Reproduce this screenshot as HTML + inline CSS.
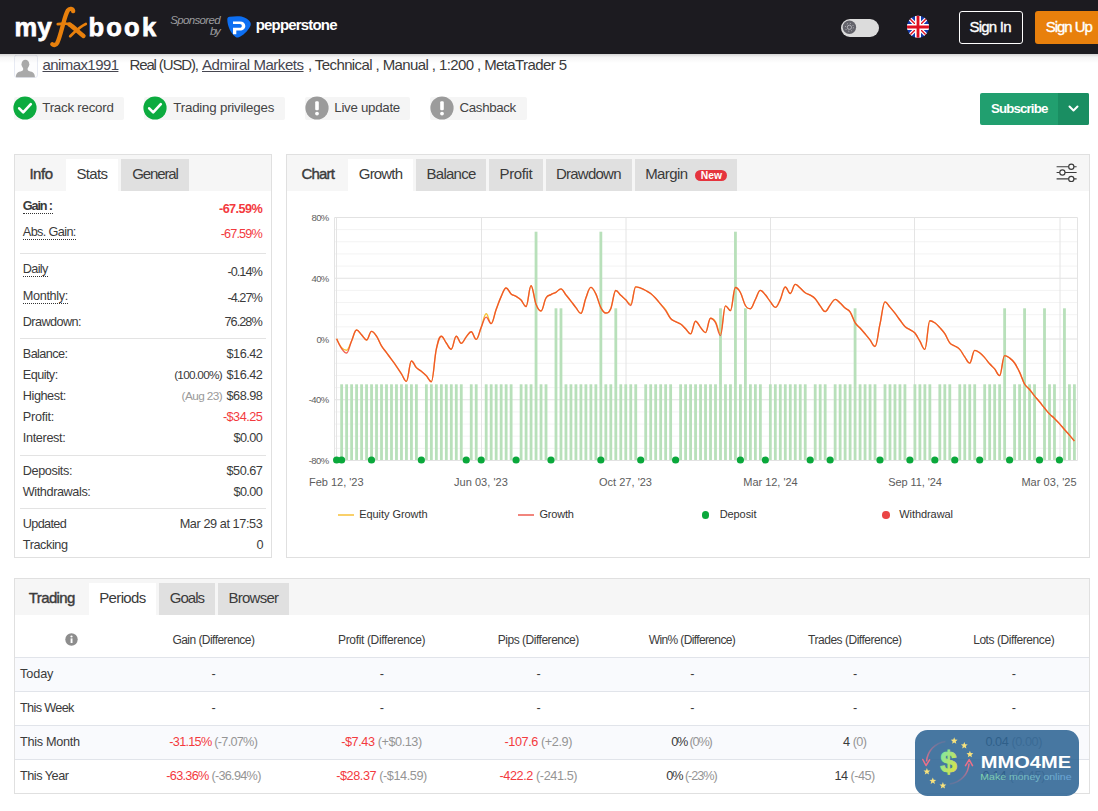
<!DOCTYPE html>
<html><head><meta charset="utf-8"><title>myfxbook</title>
<style>
*{box-sizing:border-box;margin:0;padding:0}
html,body{width:1098px;height:811px;overflow:hidden;background:#fff}
body{font-family:"Liberation Sans",sans-serif;color:#333;position:relative}
.abs{position:absolute;white-space:nowrap}
.hdr{left:0;top:0;width:1098px;height:53.6px;background:#1c1b20;z-index:5}
.hshadow{left:0;top:53.6px;width:1098px;height:9px;background:linear-gradient(rgba(0,0,0,0.17),rgba(0,0,0,0.045) 35%,rgba(0,0,0,0));z-index:5}
.t{position:absolute;white-space:nowrap;line-height:1}
.badge{position:absolute;top:97px;height:23px;background:#f5f5f5;border-radius:2px}
.panel{position:absolute;border:1px solid #e0e0e0;background:#fff}
.phead{position:absolute;left:0;top:0;right:0;background:#f6f6f6}
.tab{position:absolute;background:#e0e0e0}
.tabw{position:absolute;background:#fff}
.sep{position:absolute;height:1px;background:#e3e3e3}
.l{position:absolute;white-space:nowrap;line-height:1;font-size:12.3px;color:#333}
.r{position:absolute;white-space:nowrap;line-height:1;font-size:12.3px;color:#333;text-align:right}
.red{color:#f0323c}
.gr{color:#8e8e8e}
.dot{border-bottom:1px dotted #444;padding-bottom:1px}
.c{position:absolute;white-space:nowrap;line-height:1;font-size:12.3px;color:#333;text-align:center;transform:translateX(-50%)}
</style></head><body>
<!-- HEADER -->
<div class="abs hdr"></div>
<div class="abs hshadow"></div>
<div class="abs" style="left:0;top:0;width:1098px;height:54px;z-index:6">
<span class="t" style="left:14.40px;top:15.00px;font-size:25.50px;color:#fff;letter-spacing:0.545px;font-weight:bold;-webkit-text-stroke:0.75px #fff;">my</span>
<span class="t" style="left:88.50px;top:15.00px;font-size:25.50px;color:#fff;letter-spacing:2.230px;font-weight:bold;-webkit-text-stroke:0.75px #fff;">book</span>
<svg class="abs" style="left:48px;top:4px" width="44" height="46" viewBox="48 4 44 46"><g fill="none" stroke="#e8800c" stroke-linecap="round" stroke-linejoin="round"><path d="M73.2 11.200C72.800 8.600 69.600 7.800 67.800 10.500C66.200 13 64.800 18 63.300 23.500C61.500 30 59.500 38.500 57.200 43C56 45.200 53.800 45.600 52.300 44.200" stroke-width="4.300"/><path d="M57.8 24.200C62 23.500 66.500 23.600 70.400 24" stroke-width="2.700"/><path d="M69.5 24.500C73 26.500 79 32.500 83.500 36" stroke-width="4.400"/><path d="M85.8 24C81 26 75 31.500 70.200 36.200" stroke-width="2.700"/></g></svg>
<span class="t" style="left:170.20px;top:15.00px;font-size:11.50px;color:#9b9b9e;letter-spacing:-0.641px;font-style:italic;">Sponsored</span>
<span class="t" style="left:210.00px;top:26.00px;font-size:11.50px;color:#9b9b9e;letter-spacing:-1.446px;font-style:italic;">by</span>
<svg class="abs" style="left:225px;top:13px" width="28" height="27" viewBox="225 13 28 27"><path d="M227.300 19.200C227.300 17.700 228.200 17 229.600 16.800C233.500 16.100 238.500 15.900 241.500 16.500C245.500 17.300 249 19.800 250.300 22.200C251.100 23.800 250.800 25.200 250 26.800C247.500 31.500 243 35.500 238.800 37.300C237.600 37.800 236.600 37.700 235.600 36.900C231 33.300 227.300 26.500 227.300 19.200Z" fill="#0d6ff2"/><path d="M233 21.500h6.800c3.600 0 5.500 1.900 5.500 4.400c0 2.600-2 4.500-5.500 4.500h-3.500v3.800h-3.300v-6.500h6.700c1.400 0 2.100-.7 2.100-1.800c0-1.100-.7-1.800-2.100-1.800h-6.700z" fill="#fff"/></svg>
<span class="t" style="left:255.70px;top:17.00px;font-size:15.00px;color:#fff;letter-spacing:-0.822px;font-weight:bold;">pepperstone</span>
<div class="abs" style="left:841px;top:19px;width:38px;height:18px;border-radius:9px;background:#dcdcdc"></div>
<svg class="abs" style="left:841px;top:19px" width="18" height="18" viewBox="0 0 18 18"><circle cx="8.4" cy="8.3" r="6.7" fill="#62626a"/><circle cx="8.4" cy="8.3" r="2.1" fill="none" stroke="#b9b9be" stroke-width="0.9"/><g stroke="#b9b9be" stroke-width="1" stroke-dasharray="1.1 2.04"><circle cx="8.4" cy="8.3" r="4" fill="none"/></g></svg>
<svg class="abs" style="left:906px;top:15px" width="24" height="24" viewBox="0 0 24 24"><defs><clipPath id="fc"><circle cx="12" cy="11.8" r="11"/></clipPath></defs><g clip-path="url(#fc)"><rect width="24" height="24" fill="#1038ad"/><path d="M0 0L24 24M24 0L0 24" stroke="#fff" stroke-width="3.8"/><path d="M0 0L24 24M24 0L0 24" stroke="#e00f20" stroke-width="1.3"/><path d="M12 0V24M0 12H24" stroke="#fff" stroke-width="6"/><path d="M12 0V24M0 12H24" stroke="#e00f20" stroke-width="2.8"/></g></svg>
<div class="abs" style="left:959px;top:11px;width:64px;height:33px;border:1.3px solid #fff;border-radius:3px"></div>
<span class="t" style="left:969.50px;top:19.00px;font-size:15.00px;color:#fff;letter-spacing:-0.784px;-webkit-text-stroke:0.35px #fff;">Sign In</span>
<div class="abs" style="left:1035px;top:11px;width:70px;height:33px;background:#e8800c;border-radius:3px"></div>
<span class="t" style="left:1045.80px;top:19.00px;font-size:15.00px;color:#fff;letter-spacing:-1.061px;-webkit-text-stroke:0.35px #fff;">Sign Up</span>
</div>
<svg class="abs" style="left:14.400px;top:54.500px" width="24" height="23" viewBox="0 0 24 23"><rect x="0.500" y="0" width="23" height="22.500" rx="2.500" fill="#fdfdfe" stroke="#e7eaf3"/><ellipse cx="11.400" cy="9.300" rx="3.900" ry="4.500" fill="#a9a9a9"/><path d="M1.900 22.200C1.900 18.400 3.700 17.100 7.900 16.100C9.300 15.700 9.400 14 9 12.800L13.800 12.800C13.400 14 13.500 15.700 14.900 16.100C19.100 17.100 20.900 18.400 20.900 22.200Z" fill="#a9a9a9"/></svg>
<span class="t" style="left:42.50px;top:57.00px;font-size:15.00px;color:#464650;letter-spacing:-0.581px;text-decoration:underline;text-underline-offset:1px;text-decoration-thickness:1px;">animax1991</span>
<span class="t" style="left:129.50px;top:57.00px;font-size:15.00px;color:#3b3b3b;letter-spacing:-1.135px;">Real (USD),</span>
<span class="t" style="left:202.00px;top:57.00px;font-size:15.00px;color:#464650;letter-spacing:-0.454px;text-decoration:underline;text-underline-offset:1px;text-decoration-thickness:1px;">Admiral Markets</span>
<span class="t" style="left:308.00px;top:57.00px;font-size:15.00px;color:#3b3b3b;letter-spacing:-0.603px;">, Technical , Manual , 1:200 , MetaTrader 5</span>
<div class="badge" style="left:13.5px;width:110.5px"></div>
<svg class="abs" style="left:13.4px;top:96.4px" width="24" height="24" viewBox="0 0 24 24"><circle cx="12" cy="12" r="11.6" fill="#0cab3f"/><path d="M6.2 12.3l4 4.1l7.6-8.3" fill="none" stroke="#fff" stroke-width="2.6" stroke-linecap="round" stroke-linejoin="round"/></svg>
<span class="t" style="left:42.30px;top:101.00px;font-size:13.30px;color:#444;letter-spacing:-0.241px;">Track record</span>
<div class="badge" style="left:143.5px;width:141.0px"></div>
<svg class="abs" style="left:143.4px;top:96.4px" width="24" height="24" viewBox="0 0 24 24"><circle cx="12" cy="12" r="11.6" fill="#0cab3f"/><path d="M6.2 12.3l4 4.1l7.6-8.3" fill="none" stroke="#fff" stroke-width="2.6" stroke-linecap="round" stroke-linejoin="round"/></svg>
<span class="t" style="left:173.30px;top:101.00px;font-size:13.30px;color:#444;letter-spacing:-0.204px;">Trading privileges</span>
<div class="badge" style="left:304.7px;width:105.3px"></div>
<svg class="abs" style="left:304.6px;top:96.4px" width="24" height="24" viewBox="0 0 24 24"><circle cx="12" cy="12" r="11.6" fill="#9b9b9b"/><rect x="10.2" y="5.2" width="3.6" height="9" rx="1.2" fill="#fff"/><circle cx="12" cy="17.6" r="1.9" fill="#fff"/></svg>
<span class="t" style="left:334.30px;top:101.00px;font-size:13.30px;color:#444;letter-spacing:-0.287px;">Live update</span>
<div class="badge" style="left:429.7px;width:97.3px"></div>
<svg class="abs" style="left:429.6px;top:96.4px" width="24" height="24" viewBox="0 0 24 24"><circle cx="12" cy="12" r="11.6" fill="#9b9b9b"/><rect x="10.2" y="5.2" width="3.6" height="9" rx="1.2" fill="#fff"/><circle cx="12" cy="17.6" r="1.9" fill="#fff"/></svg>
<span class="t" style="left:459.60px;top:101.00px;font-size:13.30px;color:#444;letter-spacing:-0.363px;">Cashback</span>
<div class="abs" style="left:980px;top:93px;width:109px;height:31.7px;background:#219f6f;border-radius:2px"></div>
<div class="abs" style="left:1058px;top:93px;width:31px;height:31.7px;background:#1a8e62;border-radius:0 2px 2px 0"></div>
<span class="t" style="left:991.00px;top:102.00px;font-size:13.30px;color:#fff;letter-spacing:-0.875px;font-weight:bold;">Subscribe</span>
<svg class="abs" style="left:1066.5px;top:103.3px" width="13" height="11" viewBox="0 0 13 11"><path d="M2.5 3.5l4 4l4-4" fill="none" stroke="#fff" stroke-width="2" stroke-linecap="round" stroke-linejoin="round"/></svg>
<div class="panel" style="left:14px;top:154px;width:258px;height:404px"><div class="phead" style="height:36px"></div></div>
<div class="tabw" style="left:66px;top:159px;width:52px;height:32px"></div>
<div class="tab" style="left:121px;top:159px;width:68px;height:32px"></div>
<span class="t" style="left:29.40px;top:166.00px;font-size:15.00px;color:#3b3b3b;letter-spacing:-0.474px;-webkit-text-stroke:0.4px #3b3b3b;">Info</span>
<span class="t" style="left:76.40px;top:166.00px;font-size:15.00px;color:#3b3b3b;letter-spacing:-0.621px;">Stats</span>
<span class="t" style="left:132.20px;top:166.00px;font-size:15.00px;color:#3b3b3b;letter-spacing:-1.111px;">General</span>
<span class="t" style="left:22.80px;top:200.00px;font-size:12.70px;color:#3b3b3b;letter-spacing:-1.157px;font-weight:bold;">Gain :</span>
<div class="abs" style="left:22.8px;top:213.0px;width:30.2px;height:0;border-top:1px dotted #333"></div>
<span class="t" style="left:219.00px;top:203.00px;font-size:12.70px;color:#f33a3e;letter-spacing:-0.584px;font-weight:bold;">-67.59%</span>
<span class="t" style="left:22.80px;top:226.00px;font-size:12.70px;color:#3b3b3b;letter-spacing:-0.633px;">Abs. Gain:</span>
<div class="abs" style="left:22.8px;top:239.0px;width:53.6px;height:0;border-top:1px dotted #333"></div>
<span class="t" style="left:220.70px;top:228.00px;font-size:12.70px;color:#f33a3e;letter-spacing:-0.867px;">-67.59%</span>
<span class="t" style="left:22.80px;top:263.00px;font-size:12.70px;color:#3b3b3b;letter-spacing:-0.657px;">Daily</span>
<div class="abs" style="left:22.8px;top:276.0px;width:25.6px;height:0;border-top:1px dotted #333"></div>
<span class="t" style="left:227.40px;top:266.00px;font-size:12.70px;color:#3b3b3b;letter-spacing:-0.968px;">-0.14%</span>
<span class="t" style="left:22.80px;top:290.00px;font-size:12.70px;color:#3b3b3b;letter-spacing:-0.357px;">Monthly:</span>
<div class="abs" style="left:22.8px;top:303.4px;width:45.5px;height:0;border-top:1px dotted #333"></div>
<span class="t" style="left:227.40px;top:292.00px;font-size:12.70px;color:#3b3b3b;letter-spacing:-0.968px;">-4.27%</span>
<span class="t" style="left:22.80px;top:316.00px;font-size:12.70px;color:#3b3b3b;letter-spacing:-0.591px;">Drawdown:</span>
<span class="t" style="left:224.40px;top:316.00px;font-size:12.70px;color:#3b3b3b;letter-spacing:-0.935px;">76.28%</span>
<span class="t" style="left:22.80px;top:348.00px;font-size:12.70px;color:#3b3b3b;letter-spacing:-0.604px;">Balance:</span>
<span class="t" style="left:226.60px;top:348.00px;font-size:12.70px;color:#3b3b3b;letter-spacing:-0.529px;">$16.42</span>
<span class="t" style="left:22.80px;top:369.00px;font-size:12.70px;color:#3b3b3b;letter-spacing:-0.571px;">Equity:</span>
<span class="t" style="left:226.60px;top:369.00px;font-size:12.70px;color:#3b3b3b;letter-spacing:-0.529px;">$16.42</span>
<span class="t" style="left:174.20px;top:370.00px;font-size:11.80px;color:#3b3b3b;letter-spacing:-0.743px;">(100.00%)</span>
<span class="t" style="left:22.80px;top:390.00px;font-size:12.70px;color:#3b3b3b;letter-spacing:-0.442px;">Highest:</span>
<span class="t" style="left:226.60px;top:390.00px;font-size:12.70px;color:#3b3b3b;letter-spacing:-0.529px;">$68.98</span>
<span class="t" style="left:181.60px;top:391.00px;font-size:11.80px;color:#9a9a9a;letter-spacing:-0.594px;">(Aug 23)</span>
<span class="t" style="left:22.80px;top:411.00px;font-size:12.70px;color:#3b3b3b;letter-spacing:-0.279px;">Profit:</span>
<span class="t" style="left:222.90px;top:411.00px;font-size:12.70px;color:#f33a3e;letter-spacing:-0.529px;">-$34.25</span>
<span class="t" style="left:22.80px;top:432.00px;font-size:12.70px;color:#3b3b3b;letter-spacing:-0.361px;">Interest:</span>
<span class="t" style="left:233.50px;top:432.00px;font-size:12.70px;color:#3b3b3b;letter-spacing:-0.621px;">$0.00</span>
<span class="t" style="left:22.80px;top:465.00px;font-size:12.70px;color:#3b3b3b;letter-spacing:-0.405px;">Deposits:</span>
<span class="t" style="left:226.60px;top:465.00px;font-size:12.70px;color:#3b3b3b;letter-spacing:-0.529px;">$50.67</span>
<span class="t" style="left:22.80px;top:486.00px;font-size:12.70px;color:#3b3b3b;letter-spacing:-0.417px;">Withdrawals:</span>
<span class="t" style="left:233.50px;top:486.00px;font-size:12.70px;color:#3b3b3b;letter-spacing:-0.621px;">$0.00</span>
<span class="t" style="left:22.80px;top:518.00px;font-size:12.70px;color:#3b3b3b;letter-spacing:-0.670px;">Updated</span>
<span class="t" style="left:179.70px;top:518.00px;font-size:12.70px;color:#3b3b3b;letter-spacing:-0.419px;">Mar 29 at 17:53</span>
<span class="t" style="left:22.80px;top:539.00px;font-size:12.70px;color:#3b3b3b;letter-spacing:-0.432px;">Tracking</span>
<span class="t" style="left:256.60px;top:539.00px;font-size:12.70px;color:#3b3b3b;">0</span>
<div class="sep" style="left:20.3px;top:253px;width:245.4px"></div>
<div class="sep" style="left:20.3px;top:338px;width:245.4px"></div>
<div class="sep" style="left:20.3px;top:455px;width:245.4px"></div>
<div class="sep" style="left:20.3px;top:508px;width:245.4px"></div>
<div class="panel" style="left:286px;top:154px;width:804px;height:404px"><div class="phead" style="height:36px"></div></div>
<div class="tabw" style="left:348.3px;top:159px;width:64.7px;height:32px"></div>
<div class="tab" style="left:415.7px;top:159px;width:70.1px;height:32px"></div>
<div class="tab" style="left:489.0px;top:159px;width:54.2px;height:32px"></div>
<div class="tab" style="left:546.0px;top:159px;width:86.0px;height:32px"></div>
<div class="tab" style="left:634.7px;top:159px;width:102.0px;height:32px"></div>
<span class="t" style="left:301.60px;top:166.00px;font-size:15.00px;color:#3b3b3b;letter-spacing:-0.845px;-webkit-text-stroke:0.4px #3b3b3b;">Chart</span>
<span class="t" style="left:358.80px;top:166.00px;font-size:15.00px;color:#3b3b3b;letter-spacing:-0.830px;">Growth</span>
<span class="t" style="left:426.60px;top:166.00px;font-size:15.00px;color:#3b3b3b;letter-spacing:-0.751px;">Balance</span>
<span class="t" style="left:499.50px;top:166.00px;font-size:15.00px;color:#3b3b3b;letter-spacing:-0.362px;">Profit</span>
<span class="t" style="left:556.00px;top:166.00px;font-size:15.00px;color:#3b3b3b;letter-spacing:-0.766px;">Drawdown</span>
<span class="t" style="left:645.20px;top:166.00px;font-size:15.00px;color:#3b3b3b;letter-spacing:-0.610px;">Margin</span>
<div class="abs" style="left:695px;top:170px;width:32px;height:11.2px;border-radius:6px;background:#e5343e"></div>
<span class="t" style="left:700.80px;top:171.00px;font-size:10.30px;color:#fff;letter-spacing:0.011px;font-weight:bold;">New</span>
<svg class="abs" style="left:1054px;top:160px" width="26" height="26" viewBox="0 0 26 26"><g stroke="#3c3c3c" stroke-width="1.15" fill="#fbfbfb"><path d="M2.6 6.7H22.6M2.6 12.5H22.6M2.6 18.9H22.6"/><circle cx="17.3" cy="6.7" r="2.6"/><circle cx="8.4" cy="12.5" r="2.6"/><circle cx="17.3" cy="18.9" r="2.6"/></g></svg>
<svg class="abs" style="left:0;top:0" width="1098" height="811" viewBox="0 0 1098 811">
<line x1="334.5" x2="1077.5" y1="217.50" y2="217.50" stroke="#e2e2e2" stroke-width="1"/>
<line x1="334.5" x2="1077.5" y1="229.65" y2="229.65" stroke="#f3f3f3" stroke-width="1"/>
<line x1="334.5" x2="1077.5" y1="241.80" y2="241.80" stroke="#f3f3f3" stroke-width="1"/>
<line x1="334.5" x2="1077.5" y1="253.95" y2="253.95" stroke="#f3f3f3" stroke-width="1"/>
<line x1="334.5" x2="1077.5" y1="266.10" y2="266.10" stroke="#f3f3f3" stroke-width="1"/>
<line x1="334.5" x2="1077.5" y1="278.25" y2="278.25" stroke="#e2e2e2" stroke-width="1"/>
<line x1="334.5" x2="1077.5" y1="290.40" y2="290.40" stroke="#f3f3f3" stroke-width="1"/>
<line x1="334.5" x2="1077.5" y1="302.55" y2="302.55" stroke="#f3f3f3" stroke-width="1"/>
<line x1="334.5" x2="1077.5" y1="314.70" y2="314.70" stroke="#f3f3f3" stroke-width="1"/>
<line x1="334.5" x2="1077.5" y1="326.85" y2="326.85" stroke="#f3f3f3" stroke-width="1"/>
<line x1="334.5" x2="1077.5" y1="339.00" y2="339.00" stroke="#e2e2e2" stroke-width="1"/>
<line x1="334.5" x2="1077.5" y1="351.15" y2="351.15" stroke="#f3f3f3" stroke-width="1"/>
<line x1="334.5" x2="1077.5" y1="363.30" y2="363.30" stroke="#f3f3f3" stroke-width="1"/>
<line x1="334.5" x2="1077.5" y1="375.45" y2="375.45" stroke="#f3f3f3" stroke-width="1"/>
<line x1="334.5" x2="1077.5" y1="387.60" y2="387.60" stroke="#f3f3f3" stroke-width="1"/>
<line x1="334.5" x2="1077.5" y1="399.75" y2="399.75" stroke="#e2e2e2" stroke-width="1"/>
<line x1="334.5" x2="1077.5" y1="411.90" y2="411.90" stroke="#f3f3f3" stroke-width="1"/>
<line x1="334.5" x2="1077.5" y1="424.05" y2="424.05" stroke="#f3f3f3" stroke-width="1"/>
<line x1="334.5" x2="1077.5" y1="436.20" y2="436.20" stroke="#f3f3f3" stroke-width="1"/>
<line x1="334.5" x2="1077.5" y1="448.35" y2="448.35" stroke="#f3f3f3" stroke-width="1"/>
<line x1="334.5" x2="1077.5" y1="460.50" y2="460.50" stroke="#e2e2e2" stroke-width="1"/>
<line x1="334.5" x2="334.5" y1="217.5" y2="460.5" stroke="#e4e4e4" stroke-width="1"/>
<line x1="336.5" x2="336.5" y1="217.5" y2="460.5" stroke="#e4e4e4" stroke-width="1"/>
<line x1="481.5" x2="481.5" y1="217.5" y2="460.5" stroke="#e4e4e4" stroke-width="1"/>
<line x1="626.0" x2="626.0" y1="217.5" y2="460.5" stroke="#e4e4e4" stroke-width="1"/>
<line x1="770.5" x2="770.5" y1="217.5" y2="460.5" stroke="#e4e4e4" stroke-width="1"/>
<line x1="914.5" x2="914.5" y1="217.5" y2="460.5" stroke="#e4e4e4" stroke-width="1"/>
<line x1="1060.0" x2="1060.0" y1="217.5" y2="460.5" stroke="#e4e4e4" stroke-width="1"/>
<line x1="1077.5" x2="1077.5" y1="217.5" y2="460.5" stroke="#e4e4e4" stroke-width="1"/>
<rect x="340.23" y="384.3" width="2.8" height="75.7" fill="#b8e0ba"/>
<rect x="345.21" y="384.3" width="2.8" height="75.7" fill="#b8e0ba"/>
<rect x="350.20" y="384.3" width="2.8" height="75.7" fill="#b8e0ba"/>
<rect x="355.18" y="384.3" width="2.8" height="75.7" fill="#b8e0ba"/>
<rect x="360.17" y="384.3" width="2.8" height="75.7" fill="#b8e0ba"/>
<rect x="365.15" y="384.3" width="2.8" height="75.7" fill="#b8e0ba"/>
<rect x="370.14" y="384.3" width="2.8" height="75.7" fill="#b8e0ba"/>
<rect x="375.12" y="384.3" width="2.8" height="75.7" fill="#b8e0ba"/>
<rect x="380.11" y="384.3" width="2.8" height="75.7" fill="#b8e0ba"/>
<rect x="385.09" y="384.3" width="2.8" height="75.7" fill="#b8e0ba"/>
<rect x="390.08" y="384.3" width="2.8" height="75.7" fill="#b8e0ba"/>
<rect x="395.06" y="384.3" width="2.8" height="75.7" fill="#b8e0ba"/>
<rect x="400.05" y="384.3" width="2.8" height="75.7" fill="#b8e0ba"/>
<rect x="405.03" y="384.3" width="2.8" height="75.7" fill="#b8e0ba"/>
<rect x="410.02" y="384.3" width="2.8" height="75.7" fill="#b8e0ba"/>
<rect x="415.00" y="384.3" width="2.8" height="75.7" fill="#b8e0ba"/>
<rect x="424.97" y="384.3" width="2.8" height="75.7" fill="#b8e0ba"/>
<rect x="429.96" y="384.3" width="2.8" height="75.7" fill="#b8e0ba"/>
<rect x="434.94" y="384.3" width="2.8" height="75.7" fill="#b8e0ba"/>
<rect x="439.93" y="384.3" width="2.8" height="75.7" fill="#b8e0ba"/>
<rect x="444.91" y="384.3" width="2.8" height="75.7" fill="#b8e0ba"/>
<rect x="449.90" y="384.3" width="2.8" height="75.7" fill="#b8e0ba"/>
<rect x="454.88" y="384.3" width="2.8" height="75.7" fill="#b8e0ba"/>
<rect x="459.87" y="384.3" width="2.8" height="75.7" fill="#b8e0ba"/>
<rect x="469.84" y="384.3" width="2.8" height="75.7" fill="#b8e0ba"/>
<rect x="474.82" y="384.3" width="2.8" height="75.7" fill="#b8e0ba"/>
<rect x="484.79" y="384.3" width="2.8" height="75.7" fill="#b8e0ba"/>
<rect x="489.78" y="384.3" width="2.8" height="75.7" fill="#b8e0ba"/>
<rect x="494.76" y="384.3" width="2.8" height="75.7" fill="#b8e0ba"/>
<rect x="499.75" y="384.3" width="2.8" height="75.7" fill="#b8e0ba"/>
<rect x="504.73" y="384.3" width="2.8" height="75.7" fill="#b8e0ba"/>
<rect x="509.72" y="384.3" width="2.8" height="75.7" fill="#b8e0ba"/>
<rect x="519.69" y="384.3" width="2.8" height="75.7" fill="#b8e0ba"/>
<rect x="524.67" y="384.3" width="2.8" height="75.7" fill="#b8e0ba"/>
<rect x="529.65" y="384.3" width="2.8" height="75.7" fill="#b8e0ba"/>
<rect x="534.64" y="231.7" width="2.8" height="228.3" fill="#b8e0ba"/>
<rect x="539.62" y="384.3" width="2.8" height="75.7" fill="#b8e0ba"/>
<rect x="544.61" y="384.3" width="2.8" height="75.7" fill="#b8e0ba"/>
<rect x="554.58" y="308.3" width="2.8" height="151.7" fill="#b8e0ba"/>
<rect x="559.57" y="308.3" width="2.8" height="151.7" fill="#b8e0ba"/>
<rect x="564.55" y="384.3" width="2.8" height="75.7" fill="#b8e0ba"/>
<rect x="569.54" y="384.3" width="2.8" height="75.7" fill="#b8e0ba"/>
<rect x="574.52" y="384.3" width="2.8" height="75.7" fill="#b8e0ba"/>
<rect x="579.51" y="384.3" width="2.8" height="75.7" fill="#b8e0ba"/>
<rect x="584.49" y="384.3" width="2.8" height="75.7" fill="#b8e0ba"/>
<rect x="589.48" y="384.3" width="2.8" height="75.7" fill="#b8e0ba"/>
<rect x="594.46" y="384.3" width="2.8" height="75.7" fill="#b8e0ba"/>
<rect x="599.45" y="231.7" width="2.8" height="228.3" fill="#b8e0ba"/>
<rect x="604.43" y="384.3" width="2.8" height="75.7" fill="#b8e0ba"/>
<rect x="609.41" y="384.3" width="2.8" height="75.7" fill="#b8e0ba"/>
<rect x="614.40" y="308.3" width="2.8" height="151.7" fill="#b8e0ba"/>
<rect x="619.38" y="384.3" width="2.8" height="75.7" fill="#b8e0ba"/>
<rect x="624.37" y="384.3" width="2.8" height="75.7" fill="#b8e0ba"/>
<rect x="629.36" y="384.3" width="2.8" height="75.7" fill="#b8e0ba"/>
<rect x="634.34" y="384.3" width="2.8" height="75.7" fill="#b8e0ba"/>
<rect x="644.31" y="384.3" width="2.8" height="75.7" fill="#b8e0ba"/>
<rect x="649.30" y="384.3" width="2.8" height="75.7" fill="#b8e0ba"/>
<rect x="654.28" y="384.3" width="2.8" height="75.7" fill="#b8e0ba"/>
<rect x="659.27" y="384.3" width="2.8" height="75.7" fill="#b8e0ba"/>
<rect x="664.25" y="384.3" width="2.8" height="75.7" fill="#b8e0ba"/>
<rect x="669.24" y="384.3" width="2.8" height="75.7" fill="#b8e0ba"/>
<rect x="679.21" y="384.3" width="2.8" height="75.7" fill="#b8e0ba"/>
<rect x="684.19" y="384.3" width="2.8" height="75.7" fill="#b8e0ba"/>
<rect x="689.18" y="384.3" width="2.8" height="75.7" fill="#b8e0ba"/>
<rect x="694.16" y="384.3" width="2.8" height="75.7" fill="#b8e0ba"/>
<rect x="699.14" y="384.3" width="2.8" height="75.7" fill="#b8e0ba"/>
<rect x="704.13" y="384.3" width="2.8" height="75.7" fill="#b8e0ba"/>
<rect x="709.12" y="384.3" width="2.8" height="75.7" fill="#b8e0ba"/>
<rect x="714.10" y="384.3" width="2.8" height="75.7" fill="#b8e0ba"/>
<rect x="719.09" y="308.3" width="2.8" height="151.7" fill="#b8e0ba"/>
<rect x="724.07" y="384.3" width="2.8" height="75.7" fill="#b8e0ba"/>
<rect x="729.06" y="384.3" width="2.8" height="75.7" fill="#b8e0ba"/>
<rect x="734.04" y="231.7" width="2.8" height="228.3" fill="#b8e0ba"/>
<rect x="739.03" y="384.3" width="2.8" height="75.7" fill="#b8e0ba"/>
<rect x="744.01" y="308.3" width="2.8" height="151.7" fill="#b8e0ba"/>
<rect x="749.00" y="384.3" width="2.8" height="75.7" fill="#b8e0ba"/>
<rect x="753.98" y="384.3" width="2.8" height="75.7" fill="#b8e0ba"/>
<rect x="758.97" y="384.3" width="2.8" height="75.7" fill="#b8e0ba"/>
<rect x="768.94" y="384.3" width="2.8" height="75.7" fill="#b8e0ba"/>
<rect x="773.92" y="384.3" width="2.8" height="75.7" fill="#b8e0ba"/>
<rect x="778.90" y="384.3" width="2.8" height="75.7" fill="#b8e0ba"/>
<rect x="783.89" y="384.3" width="2.8" height="75.7" fill="#b8e0ba"/>
<rect x="788.88" y="384.3" width="2.8" height="75.7" fill="#b8e0ba"/>
<rect x="793.86" y="384.3" width="2.8" height="75.7" fill="#b8e0ba"/>
<rect x="798.85" y="384.3" width="2.8" height="75.7" fill="#b8e0ba"/>
<rect x="803.83" y="384.3" width="2.8" height="75.7" fill="#b8e0ba"/>
<rect x="813.80" y="384.3" width="2.8" height="75.7" fill="#b8e0ba"/>
<rect x="818.79" y="384.3" width="2.8" height="75.7" fill="#b8e0ba"/>
<rect x="823.77" y="384.3" width="2.8" height="75.7" fill="#b8e0ba"/>
<rect x="833.74" y="384.3" width="2.8" height="75.7" fill="#b8e0ba"/>
<rect x="838.73" y="384.3" width="2.8" height="75.7" fill="#b8e0ba"/>
<rect x="843.71" y="384.3" width="2.8" height="75.7" fill="#b8e0ba"/>
<rect x="848.70" y="384.3" width="2.8" height="75.7" fill="#b8e0ba"/>
<rect x="853.68" y="308.3" width="2.8" height="151.7" fill="#b8e0ba"/>
<rect x="858.67" y="384.3" width="2.8" height="75.7" fill="#b8e0ba"/>
<rect x="863.65" y="384.3" width="2.8" height="75.7" fill="#b8e0ba"/>
<rect x="868.64" y="384.3" width="2.8" height="75.7" fill="#b8e0ba"/>
<rect x="873.62" y="384.3" width="2.8" height="75.7" fill="#b8e0ba"/>
<rect x="883.59" y="384.3" width="2.8" height="75.7" fill="#b8e0ba"/>
<rect x="888.58" y="384.3" width="2.8" height="75.7" fill="#b8e0ba"/>
<rect x="893.56" y="384.3" width="2.8" height="75.7" fill="#b8e0ba"/>
<rect x="898.55" y="384.3" width="2.8" height="75.7" fill="#b8e0ba"/>
<rect x="903.53" y="384.3" width="2.8" height="75.7" fill="#b8e0ba"/>
<rect x="913.50" y="384.3" width="2.8" height="75.7" fill="#b8e0ba"/>
<rect x="918.49" y="384.3" width="2.8" height="75.7" fill="#b8e0ba"/>
<rect x="923.47" y="384.3" width="2.8" height="75.7" fill="#b8e0ba"/>
<rect x="928.46" y="384.3" width="2.8" height="75.7" fill="#b8e0ba"/>
<rect x="938.43" y="384.3" width="2.8" height="75.7" fill="#b8e0ba"/>
<rect x="943.41" y="384.3" width="2.8" height="75.7" fill="#b8e0ba"/>
<rect x="948.40" y="384.3" width="2.8" height="75.7" fill="#b8e0ba"/>
<rect x="958.37" y="384.3" width="2.8" height="75.7" fill="#b8e0ba"/>
<rect x="963.35" y="384.3" width="2.8" height="75.7" fill="#b8e0ba"/>
<rect x="968.34" y="384.3" width="2.8" height="75.7" fill="#b8e0ba"/>
<rect x="973.32" y="384.3" width="2.8" height="75.7" fill="#b8e0ba"/>
<rect x="983.29" y="384.3" width="2.8" height="75.7" fill="#b8e0ba"/>
<rect x="988.28" y="384.3" width="2.8" height="75.7" fill="#b8e0ba"/>
<rect x="993.26" y="384.3" width="2.8" height="75.7" fill="#b8e0ba"/>
<rect x="998.25" y="384.3" width="2.8" height="75.7" fill="#b8e0ba"/>
<rect x="1003.23" y="308.3" width="2.8" height="151.7" fill="#b8e0ba"/>
<rect x="1013.20" y="384.3" width="2.8" height="75.7" fill="#b8e0ba"/>
<rect x="1018.19" y="384.3" width="2.8" height="75.7" fill="#b8e0ba"/>
<rect x="1023.17" y="308.3" width="2.8" height="151.7" fill="#b8e0ba"/>
<rect x="1028.16" y="384.3" width="2.8" height="75.7" fill="#b8e0ba"/>
<rect x="1033.14" y="384.3" width="2.8" height="75.7" fill="#b8e0ba"/>
<rect x="1043.11" y="308.3" width="2.8" height="151.7" fill="#b8e0ba"/>
<rect x="1048.10" y="384.3" width="2.8" height="75.7" fill="#b8e0ba"/>
<rect x="1053.08" y="384.3" width="2.8" height="75.7" fill="#b8e0ba"/>
<rect x="1063.05" y="308.3" width="2.8" height="151.7" fill="#b8e0ba"/>
<rect x="1068.04" y="384.3" width="2.8" height="75.7" fill="#b8e0ba"/>
<rect x="1073.02" y="384.3" width="2.8" height="75.7" fill="#b8e0ba"/>
<path d="M336.62 338.70C336.62 338.70 339.61 345.30 341.60 347.60C343.59 349.90 344.59 350.20 346.59 350.20C348.58 350.20 349.58 345.04 351.57 341.00C353.56 336.96 354.56 330.00 356.56 330.00C358.55 330.00 359.55 332.80 361.54 334.80C363.53 336.80 364.53 340.00 366.53 340.00C368.52 340.00 369.52 331.40 371.51 331.40C373.50 331.40 374.50 333.32 376.50 336.20C378.49 339.08 379.49 342.52 381.48 345.80C383.47 349.08 384.47 349.88 386.47 352.60C388.46 355.32 389.46 356.66 391.45 359.40C393.44 362.14 394.44 363.42 396.44 366.30C398.43 369.18 399.43 370.80 401.42 373.80C403.41 376.80 404.41 381.30 406.41 381.30C408.40 381.30 409.40 361.00 411.39 361.00C413.38 361.00 414.38 365.54 416.38 367.60C418.37 369.66 419.37 369.66 421.36 371.30C423.35 372.94 424.35 373.72 426.35 375.80C428.34 377.88 429.34 381.70 431.33 381.70C433.32 381.70 434.32 358.30 436.32 349.20C438.31 340.10 439.31 336.20 441.30 336.20C443.29 336.20 444.29 340.40 446.29 343.00C448.28 345.60 449.28 349.20 451.27 349.20C453.26 349.20 454.26 336.20 456.25 336.20C458.25 336.20 459.25 343.30 461.24 343.30C463.23 343.30 464.23 339.22 466.23 336.90C468.22 334.58 469.22 331.70 471.21 331.70C473.20 331.70 474.20 339.40 476.20 339.40C478.19 339.40 479.19 332.54 481.18 327.40C483.17 322.26 484.17 313.70 486.17 313.70C488.16 313.70 489.16 323.60 491.15 323.60C493.14 323.60 494.14 315.00 496.13 309.60C498.13 304.20 499.13 300.92 501.12 296.60C503.11 292.28 504.11 288.00 506.11 288.00C508.10 288.00 509.10 292.22 511.09 293.90C513.08 295.58 514.08 295.18 516.08 296.40C518.07 297.62 519.07 297.98 521.06 300.00C523.05 302.02 524.05 306.50 526.05 306.50C528.04 306.50 529.04 285.70 531.03 285.70C533.02 285.70 534.02 299.14 536.02 304.20C538.01 309.26 539.01 311.00 541.00 311.00C542.99 311.00 543.99 301.28 545.99 298.00C547.98 294.72 548.98 295.74 550.97 294.60C552.96 293.46 553.96 293.44 555.96 292.30C557.95 291.16 558.95 288.90 560.94 288.90C562.93 288.90 563.93 292.46 565.93 294.90C567.92 297.34 568.92 298.56 570.91 301.10C572.90 303.64 573.90 305.14 575.89 307.60C577.89 310.06 578.89 313.40 580.88 313.40C582.87 313.40 583.87 303.22 585.87 298.00C587.86 292.78 588.86 287.30 590.85 287.30C592.84 287.30 593.84 289.84 595.84 293.90C597.83 297.96 598.83 303.78 600.82 307.60C602.81 311.42 603.81 313.00 605.81 313.00C607.80 313.00 608.80 313.00 610.79 308.60C612.78 304.20 613.78 290.50 615.78 290.50C617.77 290.50 618.77 293.44 620.76 295.30C622.75 297.16 623.75 298.00 625.75 299.80C627.74 301.60 628.74 304.30 630.73 304.30C632.72 304.30 633.72 286.80 635.72 286.80C637.71 286.80 638.71 287.46 640.70 288.20C642.69 288.94 643.69 289.44 645.69 290.50C647.68 291.56 648.68 291.94 650.67 293.50C652.66 295.06 653.66 296.16 655.65 298.30C657.65 300.44 658.65 301.94 660.64 304.20C662.63 306.46 663.63 306.74 665.62 309.60C667.62 312.46 668.62 316.10 670.61 318.50C672.60 320.90 673.60 320.50 675.60 321.60C677.59 322.70 678.59 322.58 680.58 324.00C682.57 325.42 683.57 326.72 685.57 328.70C687.56 330.68 688.56 333.90 690.55 333.90C692.54 333.90 693.54 321.20 695.54 321.20C697.53 321.20 698.53 325.12 700.52 327.40C702.51 329.68 703.51 332.60 705.51 332.60C707.50 332.60 708.50 318.20 710.49 318.20C712.48 318.20 713.48 318.52 715.48 321.60C717.47 324.68 718.47 333.60 720.46 333.60C722.45 333.60 723.45 305.80 725.45 305.80C727.44 305.80 728.44 310.60 730.43 310.60C732.42 310.60 733.42 287.50 735.41 287.50C737.41 287.50 738.41 288.90 740.40 292.50C742.39 296.10 743.39 302.30 745.38 305.50C747.38 308.70 748.38 308.70 750.37 308.70C752.36 308.70 753.36 303.18 755.36 299.50C757.35 295.82 758.35 290.30 760.34 290.30C762.33 290.30 763.33 292.52 765.33 294.80C767.32 297.08 768.32 299.18 770.31 301.70C772.30 304.22 773.30 307.40 775.30 307.40C777.29 307.40 778.29 303.68 780.28 299.60C782.27 295.52 783.27 287.00 785.27 287.00C787.26 287.00 788.26 293.50 790.25 293.50C792.24 293.50 793.24 284.30 795.24 284.30C797.23 284.30 798.23 286.30 800.22 288.00C802.21 289.70 803.21 291.36 805.21 292.80C807.20 294.24 808.20 294.02 810.19 295.20C812.18 296.38 813.18 296.58 815.18 298.70C817.17 300.82 818.17 303.22 820.16 305.80C822.15 308.38 823.15 311.60 825.14 311.60C827.14 311.60 828.14 307.56 830.13 305.10C832.12 302.64 833.12 299.30 835.12 299.30C837.11 299.30 838.11 301.24 840.10 303.00C842.09 304.76 843.09 306.32 845.09 308.10C847.08 309.88 848.08 309.00 850.07 311.90C852.06 314.80 853.06 319.38 855.06 322.60C857.05 325.82 858.05 325.76 860.04 328.00C862.03 330.24 863.03 331.42 865.03 333.80C867.02 336.18 868.02 337.36 870.01 339.90C872.00 342.44 873.00 346.50 875.00 346.50C876.99 346.50 877.99 333.12 879.98 324.20C881.97 315.28 882.97 301.90 884.97 301.90C886.96 301.90 887.96 304.84 889.95 307.10C891.94 309.36 892.94 310.62 894.94 313.20C896.93 315.78 897.93 317.32 899.92 320.00C901.91 322.68 902.91 324.68 904.91 326.60C906.90 328.52 907.90 328.32 909.89 329.60C911.88 330.88 912.88 330.68 914.88 333.00C916.87 335.32 917.87 337.92 919.86 341.20C921.85 344.48 922.85 349.40 924.85 349.40C926.84 349.40 927.84 320.70 929.83 320.70C931.82 320.70 932.82 321.42 934.82 322.80C936.81 324.18 937.81 325.42 939.80 327.60C941.79 329.78 942.79 330.64 944.79 333.70C946.78 336.76 947.78 340.44 949.77 342.90C951.76 345.36 952.76 344.70 954.76 346.00C956.75 347.30 957.75 347.22 959.74 349.40C961.73 351.58 962.73 354.16 964.73 356.90C966.72 359.64 967.72 363.10 969.71 363.10C971.70 363.10 972.70 350.40 974.70 350.40C976.69 350.40 977.69 351.36 979.68 352.80C981.67 354.24 982.67 355.40 984.67 357.60C986.66 359.80 987.66 361.54 989.65 363.80C991.64 366.06 992.64 366.54 994.64 368.90C996.63 371.26 997.63 375.60 999.62 375.60C1001.61 375.60 1002.61 355.60 1004.61 355.60C1006.60 355.60 1007.60 356.52 1009.59 358.00C1011.58 359.48 1012.58 360.18 1014.58 363.00C1016.57 365.82 1017.57 367.90 1019.56 372.10C1021.55 376.30 1022.55 380.52 1024.55 384.00C1026.54 387.48 1027.54 387.12 1029.53 389.50C1031.52 391.88 1032.52 393.44 1034.52 395.90C1036.51 398.36 1037.51 399.38 1039.50 401.80C1041.49 404.22 1042.49 405.58 1044.49 408.00C1046.48 410.42 1047.48 411.82 1049.47 413.90C1051.46 415.98 1052.46 416.46 1054.45 418.40C1056.45 420.34 1057.45 421.38 1059.44 423.60C1061.43 425.82 1062.43 427.20 1064.43 429.50C1066.42 431.80 1067.42 432.80 1069.41 435.10C1071.40 437.40 1074.39 441.00 1074.39 441.00" fill="none" stroke="#f7c331" stroke-width="1.35" stroke-linejoin="round"/>
<path d="M336.62 338.70C336.62 338.70 339.61 345.64 341.60 348.50C343.59 351.36 344.59 353.00 346.59 353.00C348.58 353.00 349.58 345.60 351.57 341.00C353.56 336.40 354.56 330.00 356.56 330.00C358.55 330.00 359.55 332.80 361.54 334.80C363.53 336.80 364.53 340.00 366.53 340.00C368.52 340.00 369.52 331.40 371.51 331.40C373.50 331.40 374.50 333.32 376.50 336.20C378.49 339.08 379.49 342.52 381.48 345.80C383.47 349.08 384.47 349.88 386.47 352.60C388.46 355.32 389.46 356.66 391.45 359.40C393.44 362.14 394.44 363.42 396.44 366.30C398.43 369.18 399.43 370.80 401.42 373.80C403.41 376.80 404.41 381.30 406.41 381.30C408.40 381.30 409.40 361.00 411.39 361.00C413.38 361.00 414.38 365.54 416.38 367.60C418.37 369.66 419.37 369.66 421.36 371.30C423.35 372.94 424.35 373.72 426.35 375.80C428.34 377.88 429.34 381.70 431.33 381.70C433.32 381.70 434.32 358.30 436.32 349.20C438.31 340.10 439.31 336.20 441.30 336.20C443.29 336.20 444.29 340.40 446.29 343.00C448.28 345.60 449.28 349.20 451.27 349.20C453.26 349.20 454.26 336.20 456.25 336.20C458.25 336.20 459.25 343.30 461.24 343.30C463.23 343.30 464.23 339.22 466.23 336.90C468.22 334.58 469.22 331.70 471.21 331.70C473.20 331.70 474.20 339.40 476.20 339.40C478.19 339.40 479.19 331.86 481.18 327.40C483.17 322.94 484.17 317.10 486.17 317.10C488.16 317.10 489.16 323.60 491.15 323.60C493.14 323.60 494.14 315.00 496.13 309.60C498.13 304.20 499.13 300.92 501.12 296.60C503.11 292.28 504.11 288.00 506.11 288.00C508.10 288.00 509.10 292.22 511.09 293.90C513.08 295.58 514.08 295.18 516.08 296.40C518.07 297.62 519.07 297.98 521.06 300.00C523.05 302.02 524.05 306.50 526.05 306.50C528.04 306.50 529.04 285.70 531.03 285.70C533.02 285.70 534.02 299.14 536.02 304.20C538.01 309.26 539.01 311.00 541.00 311.00C542.99 311.00 543.99 301.28 545.99 298.00C547.98 294.72 548.98 295.74 550.97 294.60C552.96 293.46 553.96 293.44 555.96 292.30C557.95 291.16 558.95 288.90 560.94 288.90C562.93 288.90 563.93 292.46 565.93 294.90C567.92 297.34 568.92 298.56 570.91 301.10C572.90 303.64 573.90 305.14 575.89 307.60C577.89 310.06 578.89 313.40 580.88 313.40C582.87 313.40 583.87 303.22 585.87 298.00C587.86 292.78 588.86 287.30 590.85 287.30C592.84 287.30 593.84 289.84 595.84 293.90C597.83 297.96 598.83 303.78 600.82 307.60C602.81 311.42 603.81 313.00 605.81 313.00C607.80 313.00 608.80 313.00 610.79 308.60C612.78 304.20 613.78 290.50 615.78 290.50C617.77 290.50 618.77 293.44 620.76 295.30C622.75 297.16 623.75 297.76 625.75 299.80C627.74 301.84 628.74 305.50 630.73 305.50C632.72 305.50 633.72 286.80 635.72 286.80C637.71 286.80 638.71 287.46 640.70 288.20C642.69 288.94 643.69 289.44 645.69 290.50C647.68 291.56 648.68 291.94 650.67 293.50C652.66 295.06 653.66 296.16 655.65 298.30C657.65 300.44 658.65 301.72 660.64 304.20C662.63 306.68 663.63 307.84 665.62 310.70C667.62 313.56 668.62 316.32 670.61 318.50C672.60 320.68 673.60 320.50 675.60 321.60C677.59 322.70 678.59 322.58 680.58 324.00C682.57 325.42 683.57 326.72 685.57 328.70C687.56 330.68 688.56 333.90 690.55 333.90C692.54 333.90 693.54 321.20 695.54 321.20C697.53 321.20 698.53 325.12 700.52 327.40C702.51 329.68 703.51 332.60 705.51 332.60C707.50 332.60 708.50 318.20 710.49 318.20C712.48 318.20 713.48 319.12 715.48 322.60C717.47 326.08 718.47 335.60 720.46 335.60C722.45 335.60 723.45 305.80 725.45 305.80C727.44 305.80 728.44 310.60 730.43 310.60C732.42 310.60 733.42 287.50 735.41 287.50C737.41 287.50 738.41 288.90 740.40 292.50C742.39 296.10 743.39 302.30 745.38 305.50C747.38 308.70 748.38 308.70 750.37 308.70C752.36 308.70 753.36 303.18 755.36 299.50C757.35 295.82 758.35 290.30 760.34 290.30C762.33 290.30 763.33 292.52 765.33 294.80C767.32 297.08 768.32 299.18 770.31 301.70C772.30 304.22 773.30 307.40 775.30 307.40C777.29 307.40 778.29 303.68 780.28 299.60C782.27 295.52 783.27 287.00 785.27 287.00C787.26 287.00 788.26 293.50 790.25 293.50C792.24 293.50 793.24 284.30 795.24 284.30C797.23 284.30 798.23 286.30 800.22 288.00C802.21 289.70 803.21 291.36 805.21 292.80C807.20 294.24 808.20 294.02 810.19 295.20C812.18 296.38 813.18 296.58 815.18 298.70C817.17 300.82 818.17 303.22 820.16 305.80C822.15 308.38 823.15 311.60 825.14 311.60C827.14 311.60 828.14 307.56 830.13 305.10C832.12 302.64 833.12 299.30 835.12 299.30C837.11 299.30 838.11 301.24 840.10 303.00C842.09 304.76 843.09 306.32 845.09 308.10C847.08 309.88 848.08 309.00 850.07 311.90C852.06 314.80 853.06 319.38 855.06 322.60C857.05 325.82 858.05 325.76 860.04 328.00C862.03 330.24 863.03 331.42 865.03 333.80C867.02 336.18 868.02 337.36 870.01 339.90C872.00 342.44 873.00 346.50 875.00 346.50C876.99 346.50 877.99 333.12 879.98 324.20C881.97 315.28 882.97 301.90 884.97 301.90C886.96 301.90 887.96 304.84 889.95 307.10C891.94 309.36 892.94 310.62 894.94 313.20C896.93 315.78 897.93 317.32 899.92 320.00C901.91 322.68 902.91 324.68 904.91 326.60C906.90 328.52 907.90 328.32 909.89 329.60C911.88 330.88 912.88 330.68 914.88 333.00C916.87 335.32 917.87 337.92 919.86 341.20C921.85 344.48 922.85 349.40 924.85 349.40C926.84 349.40 927.84 320.70 929.83 320.70C931.82 320.70 932.82 321.42 934.82 322.80C936.81 324.18 937.81 325.42 939.80 327.60C941.79 329.78 942.79 330.64 944.79 333.70C946.78 336.76 947.78 340.44 949.77 342.90C951.76 345.36 952.76 344.70 954.76 346.00C956.75 347.30 957.75 347.22 959.74 349.40C961.73 351.58 962.73 354.16 964.73 356.90C966.72 359.64 967.72 363.10 969.71 363.10C971.70 363.10 972.70 350.40 974.70 350.40C976.69 350.40 977.69 351.36 979.68 352.80C981.67 354.24 982.67 355.40 984.67 357.60C986.66 359.80 987.66 361.54 989.65 363.80C991.64 366.06 992.64 366.54 994.64 368.90C996.63 371.26 997.63 375.60 999.62 375.60C1001.61 375.60 1002.61 355.60 1004.61 355.60C1006.60 355.60 1007.60 356.52 1009.59 358.00C1011.58 359.48 1012.58 360.18 1014.58 363.00C1016.57 365.82 1017.57 367.90 1019.56 372.10C1021.55 376.30 1022.55 380.52 1024.55 384.00C1026.54 387.48 1027.54 387.12 1029.53 389.50C1031.52 391.88 1032.52 393.44 1034.52 395.90C1036.51 398.36 1037.51 399.38 1039.50 401.80C1041.49 404.22 1042.49 405.58 1044.49 408.00C1046.48 410.42 1047.48 411.82 1049.47 413.90C1051.46 415.98 1052.46 416.46 1054.45 418.40C1056.45 420.34 1057.45 421.38 1059.44 423.60C1061.43 425.82 1062.43 427.20 1064.43 429.50C1066.42 431.80 1067.42 432.80 1069.41 435.10C1071.40 437.40 1074.39 441.00 1074.39 441.00" fill="none" stroke="#ef3e2a" stroke-opacity="0.82" stroke-width="1.35" stroke-linejoin="round"/>
<circle cx="336.62" cy="460" r="3.6" fill="#0aa83b"/>
<circle cx="341.60" cy="460" r="3.6" fill="#0aa83b"/>
<circle cx="371.51" cy="460" r="3.6" fill="#0aa83b"/>
<circle cx="421.36" cy="460" r="3.6" fill="#0aa83b"/>
<circle cx="466.23" cy="460" r="3.6" fill="#0aa83b"/>
<circle cx="481.18" cy="460" r="3.6" fill="#0aa83b"/>
<circle cx="516.08" cy="460" r="3.6" fill="#0aa83b"/>
<circle cx="550.97" cy="460" r="3.6" fill="#0aa83b"/>
<circle cx="600.82" cy="460" r="3.6" fill="#0aa83b"/>
<circle cx="640.70" cy="460" r="3.6" fill="#0aa83b"/>
<circle cx="675.60" cy="460" r="3.6" fill="#0aa83b"/>
<circle cx="740.40" cy="460" r="3.6" fill="#0aa83b"/>
<circle cx="765.33" cy="460" r="3.6" fill="#0aa83b"/>
<circle cx="810.19" cy="460" r="3.6" fill="#0aa83b"/>
<circle cx="830.13" cy="460" r="3.6" fill="#0aa83b"/>
<circle cx="879.98" cy="460" r="3.6" fill="#0aa83b"/>
<circle cx="909.89" cy="460" r="3.6" fill="#0aa83b"/>
<circle cx="934.82" cy="460" r="3.6" fill="#0aa83b"/>
<circle cx="954.76" cy="460" r="3.6" fill="#0aa83b"/>
<circle cx="979.68" cy="460" r="3.6" fill="#0aa83b"/>
<circle cx="1009.59" cy="460" r="3.6" fill="#0aa83b"/>
<circle cx="1039.50" cy="460" r="3.6" fill="#0aa83b"/>
<circle cx="1059.44" cy="460" r="3.6" fill="#0aa83b"/>
</svg>
<span class="t" style="left:311.61px;top:213.00px;font-size:9.50px;color:#5e5e5e;letter-spacing:-0.713px;">80%</span>
<span class="t" style="left:311.61px;top:274.00px;font-size:9.50px;color:#5e5e5e;letter-spacing:-0.713px;">40%</span>
<span class="t" style="left:316.50px;top:335.00px;font-size:9.50px;color:#5e5e5e;letter-spacing:-1.030px;">0%</span>
<span class="t" style="left:308.69px;top:395.00px;font-size:9.50px;color:#5e5e5e;letter-spacing:-0.554px;">-40%</span>
<span class="t" style="left:308.69px;top:456.00px;font-size:9.50px;color:#5e5e5e;letter-spacing:-0.554px;">-80%</span>
<span class="t" style="left:309.00px;top:477.00px;font-size:11.00px;color:#5c5c5c;letter-spacing:-0.010px;">Feb 12, '23</span>
<span class="t" style="left:454.00px;top:477.00px;font-size:11.00px;color:#5c5c5c;letter-spacing:0.032px;">Jun 03, '23</span>
<span class="t" style="left:599.00px;top:477.00px;font-size:11.00px;color:#5c5c5c;letter-spacing:0.014px;">Oct 27, '23</span>
<span class="t" style="left:743.30px;top:477.00px;font-size:11.00px;color:#5c5c5c;letter-spacing:-0.029px;">Mar 12, '24</span>
<span class="t" style="left:888.20px;top:477.00px;font-size:11.00px;color:#5c5c5c;letter-spacing:-0.070px;">Sep 11, '24</span>
<span class="t" style="left:1021.40px;top:477.00px;font-size:11.00px;color:#5c5c5c;letter-spacing:0.051px;">Mar 03, '25</span>
<div class="abs" style="left:337.8px;top:513.7px;width:16.2px;height:2px;background:#f9d06a"></div>
<span class="t" style="left:359.20px;top:509.00px;font-size:11.00px;color:#333;letter-spacing:-0.057px;">Equity Growth</span>
<div class="abs" style="left:518.3px;top:513.7px;width:15.7px;height:2px;background:#f1857d"></div>
<span class="t" style="left:539.40px;top:509.00px;font-size:11.00px;color:#333;letter-spacing:-0.171px;">Growth</span>
<div class="abs" style="left:701.9px;top:511px;width:7.6px;height:7.6px;border-radius:50%;background:#0aa83b"></div>
<span class="t" style="left:719.70px;top:509.00px;font-size:11.00px;color:#333;letter-spacing:-0.083px;">Deposit</span>
<div class="abs" style="left:882.2px;top:511px;width:7.6px;height:7.6px;border-radius:50%;background:#ea4545"></div>
<span class="t" style="left:899.30px;top:509.00px;font-size:11.00px;color:#333;letter-spacing:-0.079px;">Withdrawal</span>
<div class="panel" style="left:14px;top:578px;width:1076px;height:216px"><div class="phead" style="height:36px"></div></div>
<div class="abs" style="left:15px;top:657.5px;width:1074px;height:34.0px;background:#f9fafd"></div>
<div class="abs" style="left:15px;top:725.5px;width:1074px;height:34.0px;background:#f9fafd"></div>
<div class="abs" style="left:15px;top:657px;width:1074px;height:1px;background:#e1e4ea"></div>
<div class="abs" style="left:15px;top:691px;width:1074px;height:1px;background:#e1e4ea"></div>
<div class="abs" style="left:15px;top:725px;width:1074px;height:1px;background:#e1e4ea"></div>
<div class="abs" style="left:15px;top:759px;width:1074px;height:1px;background:#e1e4ea"></div>
<div class="tabw" style="left:89.2px;top:583px;width:67.1px;height:32.5px"></div>
<div class="tab" style="left:159.3px;top:583px;width:56.1px;height:32px"></div>
<div class="tab" style="left:218.0px;top:583px;width:71.0px;height:32px"></div>
<span class="t" style="left:28.80px;top:590.00px;font-size:15.00px;color:#3b3b3b;letter-spacing:-0.618px;-webkit-text-stroke:0.4px #3b3b3b;">Trading</span>
<span class="t" style="left:99.20px;top:590.00px;font-size:15.00px;color:#3b3b3b;letter-spacing:-0.627px;">Periods</span>
<span class="t" style="left:169.80px;top:590.00px;font-size:15.00px;color:#3b3b3b;letter-spacing:-0.997px;">Goals</span>
<span class="t" style="left:228.50px;top:590.00px;font-size:15.00px;color:#3b3b3b;letter-spacing:-0.752px;">Browser</span>
<svg class="abs" style="left:64.5px;top:632.5px" width="13" height="13" viewBox="0 0 13 13"><circle cx="6.5" cy="6.5" r="6.2" fill="#8d8d8d"/><rect x="5.6" y="5.4" width="1.9" height="4.6" fill="#fff"/><circle cx="6.5" cy="3.5" r="1.1" fill="#fff"/></svg>
<span class="t" style="left:172.45px;top:634.00px;font-size:12.00px;color:#3b3b3b;letter-spacing:-0.541px;">Gain (Difference)</span>
<span class="t" style="left:338.05px;top:634.00px;font-size:12.00px;color:#3b3b3b;letter-spacing:-0.350px;">Profit (Difference)</span>
<span class="t" style="left:497.75px;top:634.00px;font-size:12.00px;color:#3b3b3b;letter-spacing:-0.478px;">Pips (Difference)</span>
<span class="t" style="left:648.80px;top:634.00px;font-size:12.00px;color:#3b3b3b;letter-spacing:-0.634px;">Win% (Difference)</span>
<span class="t" style="left:808.10px;top:634.00px;font-size:12.00px;color:#3b3b3b;letter-spacing:-0.484px;">Trades (Difference)</span>
<span class="t" style="left:973.15px;top:634.00px;font-size:12.00px;color:#3b3b3b;letter-spacing:-0.436px;">Lots (Difference)</span>
<span class="t" style="left:20.00px;top:668.00px;font-size:12.70px;color:#3b3b3b;letter-spacing:-0.098px;">Today</span>
<span class="t" style="left:20.00px;top:702.00px;font-size:12.70px;color:#3b3b3b;letter-spacing:-0.657px;">This Week</span>
<span class="t" style="left:20.00px;top:736.00px;font-size:12.70px;color:#3b3b3b;letter-spacing:-0.313px;">This Month</span>
<span class="t" style="left:20.00px;top:770.00px;font-size:12.70px;color:#3b3b3b;letter-spacing:-0.494px;">This Year</span>
<span class="t" style="left:211.59px;top:668.00px;font-size:12.70px;color:#3b3b3b;">-</span>
<span class="t" style="left:379.69px;top:668.00px;font-size:12.70px;color:#3b3b3b;">-</span>
<span class="t" style="left:536.39px;top:668.00px;font-size:12.70px;color:#3b3b3b;">-</span>
<span class="t" style="left:690.19px;top:668.00px;font-size:12.70px;color:#3b3b3b;">-</span>
<span class="t" style="left:852.99px;top:668.00px;font-size:12.70px;color:#3b3b3b;">-</span>
<span class="t" style="left:1011.79px;top:668.00px;font-size:12.70px;color:#3b3b3b;">-</span>
<span class="t" style="left:211.59px;top:702.00px;font-size:12.70px;color:#3b3b3b;">-</span>
<span class="t" style="left:379.69px;top:702.00px;font-size:12.70px;color:#3b3b3b;">-</span>
<span class="t" style="left:536.39px;top:702.00px;font-size:12.70px;color:#3b3b3b;">-</span>
<span class="t" style="left:690.19px;top:702.00px;font-size:12.70px;color:#3b3b3b;">-</span>
<span class="t" style="left:852.99px;top:702.00px;font-size:12.70px;color:#3b3b3b;">-</span>
<span class="t" style="left:1011.79px;top:702.00px;font-size:12.70px;color:#3b3b3b;">-</span>
<span class="t" style="left:169.30px;top:736.00px;font-size:12.70px;letter-spacing:-0.722px;color:#f33a3e">-31.15% <span style="color:#959595">(-7.07%)</span></span>
<span class="t" style="left:166.30px;top:770.00px;font-size:12.70px;letter-spacing:-0.712px;color:#f33a3e">-63.36% <span style="color:#959595">(-36.94%)</span></span>
<span class="t" style="left:341.20px;top:736.00px;font-size:12.70px;letter-spacing:-0.436px;color:#f33a3e">-$7.43 <span style="color:#959595">(+$0.13)</span></span>
<span class="t" style="left:336.20px;top:770.00px;font-size:12.70px;letter-spacing:-0.434px;color:#f33a3e">-$28.37 <span style="color:#959595">(-$14.59)</span></span>
<span class="t" style="left:504.50px;top:736.00px;font-size:12.70px;letter-spacing:-0.423px;color:#f33a3e">-107.6 <span style="color:#959595">(+2.9)</span></span>
<span class="t" style="left:499.50px;top:770.00px;font-size:12.70px;letter-spacing:-0.422px;color:#f33a3e">-422.2 <span style="color:#959595">(-241.5)</span></span>
<span class="t" style="left:671.20px;top:736.00px;font-size:12.70px;letter-spacing:-1.183px;color:#3b3b3b">0% <span style="color:#959595">(0%)</span></span>
<span class="t" style="left:666.20px;top:770.00px;font-size:12.70px;letter-spacing:-1.049px;color:#3b3b3b">0% <span style="color:#959595">(-23%)</span></span>
<span class="t" style="left:843.10px;top:736.00px;font-size:12.70px;letter-spacing:-0.528px;color:#3b3b3b">4 <span style="color:#959595">(0)</span></span>
<span class="t" style="left:834.60px;top:770.00px;font-size:12.70px;letter-spacing:-0.553px;color:#3b3b3b">14 <span style="color:#959595">(-45)</span></span>
<span class="t" style="left:985.40px;top:736.00px;font-size:12.70px;letter-spacing:-0.433px;color:#3b3b3b">0.04 <span style="color:#959595">(0.00)</span></span>
<span class="t" style="left:982.50px;top:770.00px;font-size:12.70px;letter-spacing:-0.241px;color:#3b3b3b">0.14 <span style="color:#959595">(-0.45)</span></span>
<div class="abs" style="left:915px;top:730px;width:164.400px;height:65.800px;border-radius:12.500px;background:rgba(46,100,148,0.88)"></div>
<svg class="abs" style="left:915px;top:730px" width="165" height="66" viewBox="0 0 165 66">
<defs><linearGradient id="dg" x1="0" y1="0" x2="1" y2="1"><stop offset="0" stop-color="#6fe8b4"/><stop offset="1" stop-color="#efe032"/></linearGradient>
<linearGradient id="la" x1="0" y1="0" x2="0" y2="1"><stop offset="0" stop-color="#e0708a" stop-opacity="0.150"/><stop offset="1" stop-color="#ee7088"/></linearGradient>
<linearGradient id="ra" x1="0" y1="1" x2="0" y2="0"><stop offset="0" stop-color="#e0708a" stop-opacity="0.150"/><stop offset="1" stop-color="#ee7088"/></linearGradient>
<linearGradient id="tg" x1="0" y1="0" x2="1" y2="0"><stop offset="0" stop-color="#86dcae"/><stop offset="1" stop-color="#6ea6de"/></linearGradient></defs>
<text x="33.500" y="42.300" font-family="Liberation Sans" font-weight="bold" font-size="30" fill="url(#dg)" stroke="url(#dg)" stroke-width="0.800" text-anchor="middle">$</text>
<path d="M30.400 11.400 A21.600 21.600 0 0 0 11.600 31.500" fill="none" stroke="url(#la)" stroke-width="1.500"/><path d="M7.800 29.500l3.200 6l3.600-5.600" fill="none" stroke="#ee7088" stroke-width="1.500" stroke-linecap="round" stroke-linejoin="round"/>
<path d="M34.700 54 A21.600 21.600 0 0 0 54 33.500" fill="none" stroke="url(#ra)" stroke-width="1.500"/><path d="M50.500 35.600l3.700-6l3.300 6" fill="none" stroke="#ee7088" stroke-width="1.500" stroke-linecap="round" stroke-linejoin="round"/>
<g fill="#f8e27c"><polygon points="39.2,7.3 40.1,9.6 42.6,9.8 40.7,11.4 41.3,13.8 39.2,12.5 37.1,13.8 37.7,11.4 35.8,9.8 38.3,9.6"/><polygon points="49.3,12.0 50.2,14.3 52.7,14.5 50.8,16.1 51.4,18.5 49.3,17.2 47.2,18.5 47.8,16.1 45.9,14.5 48.4,14.3"/><polygon points="54.9,20.8 55.8,23.1 58.3,23.3 56.4,24.9 57.0,27.3 54.9,26.0 52.8,27.3 53.4,24.9 51.5,23.3 54.0,23.1"/><polygon points="11.9,38.1 12.8,40.4 15.3,40.6 13.4,42.2 14.0,44.6 11.9,43.3 9.8,44.6 10.4,42.2 8.5,40.6 11.0,40.4"/><polygon points="17.8,47.4 18.7,49.7 21.2,49.9 19.3,51.5 19.9,53.9 17.8,52.6 15.7,53.9 16.3,51.5 14.4,49.9 16.9,49.7"/><polygon points="27.9,52.1 28.8,54.4 31.3,54.6 29.4,56.2 30.0,58.6 27.9,57.3 25.8,58.6 26.4,56.2 24.5,54.6 27.0,54.4"/></g>
<text x="65.800" y="37.800" font-family="Liberation Sans" font-weight="bold" font-size="17" fill="#fff" textLength="90.200" lengthAdjust="spacingAndGlyphs">MMO4ME</text>
<text x="65.300" y="49.600" font-family="Liberation Sans" font-size="9.800" fill="url(#tg)" fill-opacity="0.920" textLength="91.200" lengthAdjust="spacingAndGlyphs">Make money online</text>
</svg>
</body></html>
